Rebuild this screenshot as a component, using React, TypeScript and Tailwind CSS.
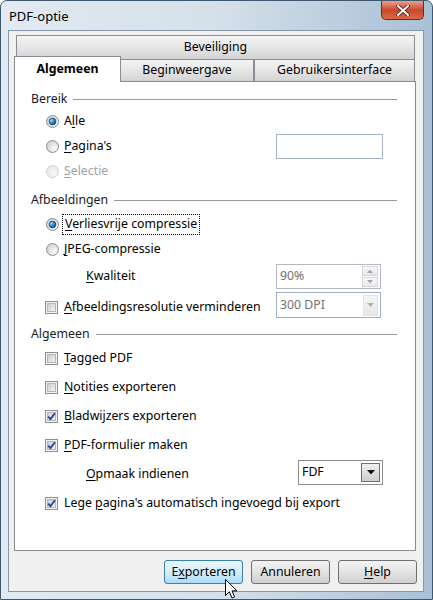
import React from "react";

const Radio = ({ checked = false, disabled = false }: { checked?: boolean; disabled?: boolean }) => (
  <svg width="13" height="13" viewBox="0 0 13 13" className="shrink-0">
    <defs>
      <radialGradient id={`rf${checked ? 1 : 0}${disabled ? 1 : 0}`} cx="0.65" cy="0.65" r="0.7">
        <stop offset="0" stopColor={disabled ? "#f7f7f7" : "#fbfbfb"} />
        <stop offset="1" stopColor={disabled ? "#e8e8e8" : "#cfd0d1"} />
      </radialGradient>
      <radialGradient id="rdot" cx="0.35" cy="0.35" r="0.75">
        <stop offset="0" stopColor="#a9dcfa" />
        <stop offset="0.45" stopColor="#2c8ad0" />
        <stop offset="1" stopColor="#0b3f7a" />
      </radialGradient>
    </defs>
    <circle cx="6.5" cy="6.5" r="6" fill={`url(#rf${checked ? 1 : 0}${disabled ? 1 : 0})`} stroke={disabled ? "#cfcfcf" : "#8c8e90"} strokeWidth="1" />
    {checked && <circle cx="6.5" cy="6.5" r="3.4" fill="url(#rdot)" stroke="#163f6e" strokeWidth="0.6" />}
  </svg>
);

const Check = ({ checked = false }: { checked?: boolean }) => (
  <svg width="13" height="13" viewBox="0 0 13 13" className="shrink-0">
    <defs>
      <linearGradient id="cbin" x1="0" y1="0" x2="1" y2="1">
        <stop offset="0" stopColor="#c6cace" />
        <stop offset="1" stopColor="#f7f7f7" />
      </linearGradient>
    </defs>
    <rect x="0.5" y="0.5" width="12" height="12" fill="#f4f4f4" stroke="#8e8f8f" />
    <rect x="2.5" y="2.5" width="8" height="8" fill="url(#cbin)" stroke="#b4b6b8" />
    {checked && (
      <path d="M3.2 6.6 L5.4 9.2 L9.9 3.2" fill="none" stroke="#2a4594" strokeWidth="1.9" strokeLinejoin="round" />
    )}
  </svg>
);

const U = ({ children }: { children: React.ReactNode }) => <span className="underline underline-offset-2">{children}</span>;

const Section = ({ label, className = "" }: { label: string; className?: string }) => (
  <div className={`flex items-center h-[18px] text-[#1a1a1a] ${className}`}>
    <span>{label}</span>
    <div className="flex-1 ml-[6px] h-px bg-[#9a9a9a]" />
  </div>
);

const Tab = ({ children, className = "" }: { children: React.ReactNode; className?: string }) => (
  <div
    className={`h-full flex items-center justify-center border-t border-l border-r border-[#898c95] bg-gradient-to-b from-[#f4f4f4] via-[#e6e6e6] to-[#d3d3d3] text-black ${className}`}
  >
    {children}
  </div>
);

const Btn = ({ children, hover = false }: { children: React.ReactNode; hover?: boolean }) => (
  <div
    className={`w-[79px] h-[24px] rounded-[3px] border flex items-center justify-center text-black ${
      hover
        ? "border-[#3c7fb1] bg-gradient-to-b from-[#eaf6fd] via-[#d5eefc] to-[#a9daf6]"
        : "border-[#707070] bg-gradient-to-b from-[#f4f4f4] via-[#e3e3e3] to-[#cfcfcf]"
    }`}
  >
    {children}
  </div>
);

export default function App() {
  return (
    <div className="relative w-[433px] h-[600px] overflow-hidden font-['Noto_Sans',sans-serif] text-[12.3px] leading-none select-none">
      {/* frame */}
      <div className="w-[433px] h-[600px] rounded-t-[7px] border border-[#3f5870] bg-gradient-to-r from-[#e2eaf2] via-[#d5e0ea] to-[#a9c0d6] flex flex-col">
        <div className="h-[29px] flex items-start justify-between">
          <div className="pl-[8px] pt-[2px] h-[29px] flex items-center text-[13px] text-black">PDF-optie</div>
          <div className="mr-[8px] w-[43px] h-[19px] rounded-b-[5px] border border-t-0 border-[#6b2a1e] bg-gradient-to-b from-[#e8a08e] via-[#c8472c] to-[#d96a45] flex items-center justify-center">
            <svg width="14" height="11" viewBox="0 0 14 11">
              <path d="M2 1 L12 10 M12 1 L2 10" stroke="#4a1a12" strokeWidth="3.6" strokeLinecap="round" />
              <path d="M2 1 L12 10 M12 1 L2 10" stroke="#ffffff" strokeWidth="2" strokeLinecap="round" />
            </svg>
          </div>
        </div>
        {/* client area */}
        <div className="ml-[7px] mr-[8px] h-[562px] border border-[#8797a9] bg-[#f0f0f0] flex flex-col pl-[5px] pr-[7px]">
          <div className="h-[4px]" />
          {/* tab row 1 */}
          <div className="h-[24px] ml-[2px] mr-[1px] flex">
            <Tab className="flex-1">Beveiliging</Tab>
          </div>
          {/* tab row 2 */}
          <div className="h-[22px] ml-[2px] mr-[1px] flex items-end">
            <div className="relative z-10 -ml-[2px] w-[107px] h-[26px] -mb-px bg-white border-t border-l border-r border-[#898c95] flex items-center justify-center font-bold text-black pb-[1px]">
              Algemeen
            </div>
            <Tab className="w-[133px] border-l-0">Beginweergave</Tab>
            <Tab className="flex-1">Gebruikersinterface</Tab>
          </div>
          {/* panel */}
          <div className="h-[470px] border border-[#898c95] bg-white pl-[16px] pr-[18px] pt-[8px] text-black">
            <Section label="Bereik" />
            <div className="flex items-center h-[25px] pl-[15px] mt-[1px]">
              <Radio checked />
              <span className="ml-[5px]">
                A<U>l</U>le
              </span>
            </div>
            <div className="flex items-center h-[25px] pl-[15px]">
              <Radio />
              <span className="ml-[5px]">
                <U>P</U>agina's
              </span>
              <div className="ml-auto mr-[14px] w-[107px] h-[25px] border border-[#a6b3c5] bg-white" />
            </div>
            <div className="flex items-center h-[25px] pl-[15px] text-[#a3a3a3]">
              <Radio disabled />
              <span className="ml-[5px]">
                <U>S</U>electie
              </span>
            </div>

            <Section label="Afbeeldingen" className="mt-[7px]" />
            <div className="flex items-center h-[25px] pl-[15px] mt-[3px]">
              <Radio checked />
              <span className="ml-[3px] px-[2px] py-[3px] border border-dotted border-black">
                <U>V</U>erliesvrije compressie
              </span>
            </div>
            <div className="flex items-center h-[25px] pl-[15px]">
              <Radio />
              <span className="ml-[5px]">
                <U>J</U>PEG-compressie
              </span>
            </div>
            <div className="flex items-center h-[29px] pl-[55px]">
              <span>
                <U>K</U>waliteit
              </span>
              <div className="ml-auto mr-[16px] w-[105px] h-[25px] border border-[#b5bac2] bg-white flex items-center pl-[3px] text-[#727272]">
                <span className="flex-1">90%</span>
                <div className="w-[16px] h-[21px] mr-[2px] flex flex-col gap-[1px]">
                  <div className="flex-1 border border-[#d2d6dc] bg-gradient-to-b from-[#f8f8f8] to-[#e8e8e8] flex items-center justify-center">
                    <svg width="6" height="4" viewBox="0 0 6 4"><path d="M0 4 L3 0.5 L6 4 Z" fill="#a5a5a5" /></svg>
                  </div>
                  <div className="flex-1 border border-[#d2d6dc] bg-gradient-to-b from-[#f8f8f8] to-[#e8e8e8] flex items-center justify-center">
                    <svg width="6" height="4" viewBox="0 0 6 4"><path d="M0 0 L3 3.5 L6 0 Z" fill="#a5a5a5" /></svg>
                  </div>
                </div>
              </div>
            </div>
            <div className="flex items-center h-[28px] pl-[14px]">
              <div className="flex items-center pt-[4px]">
                <Check />
                <span className="ml-[6px]">
                  <U>A</U>fbeeldingsresolutie verminderen
                </span>
              </div>
              <div className="ml-auto mr-[16px] w-[105px] h-[26px] border border-[#9fb0c6] bg-white flex items-center pl-[3px] text-[#727272]">
                <span className="flex-1">300 DPI</span>
                <div className="w-[15px] h-[21px] mr-[2px] border border-[#e2e4e7] bg-gradient-to-b from-[#f5f5f5] to-[#e7e7e7] flex items-center justify-center">
                  <svg width="7" height="4" viewBox="0 0 7 4"><path d="M0 0 L3.5 4 L7 0 Z" fill="#b0b0b0" /></svg>
                </div>
              </div>
            </div>

            <Section label="Algemeen" className="mt-[6px]" />
            <div className="flex items-center h-[29px] pl-[14px] mt-[1px]">
              <Check />
              <span className="ml-[6px]">
                <U>T</U>agged PDF
              </span>
            </div>
            <div className="flex items-center h-[29px] pl-[14px]">
              <Check />
              <span className="ml-[6px]">
                <U>N</U>otities exporteren
              </span>
            </div>
            <div className="flex items-center h-[29px] pl-[14px]">
              <Check checked />
              <span className="ml-[6px]">
                <U>B</U>ladwijzers exporteren
              </span>
            </div>
            <div className="flex items-center h-[29px] pl-[14px]">
              <Check checked />
              <span className="ml-[6px]">
                <U>P</U>DF-formulier maken
              </span>
            </div>
            <div className="flex items-center h-[29px] pl-[55px]">
              <span>
                <U>O</U>pmaak indienen
              </span>
              <div className="ml-auto mr-[14px] self-start w-[85px] h-[25px] border border-[#8d8d8d] bg-white flex items-center pl-[3px] text-black">
                <span className="flex-1">FDF</span>
                <div className="w-[19px] h-[19px] mr-[2px] border border-[#6f6f6f] bg-gradient-to-b from-[#efefef] to-[#cfcfcf] flex items-center justify-center">
                  <svg width="8" height="5" viewBox="0 0 8 5"><path d="M0 0 L4 4.5 L8 0 Z" fill="#111111" /></svg>
                </div>
              </div>
            </div>
            <div className="flex items-center h-[29px] pl-[14px]">
              <Check checked />
              <span className="ml-[6px]">
                Lege <U>p</U>agina's automatisch ingevoegd bij export
              </span>
            </div>
          </div>
          {/* buttons */}
          <div className="mt-[9px] h-[24px] flex justify-end gap-[8px] -mr-[1px]">
            <Btn hover>
              E<U>x</U>porteren
            </Btn>
            <Btn>Annuleren</Btn>
            <Btn>
              <U>H</U>elp
            </Btn>
          </div>
        </div>
      </div>
      {/* mouse cursor */}
      <svg className="absolute left-[225px] top-[579px]" width="14" height="21" viewBox="0 0 14 21">
        <path d="M0.5 0.5 L0.5 16.5 L4.3 12.8 L7 19 L9.6 17.9 L7 11.9 L12 11.9 Z" fill="#ffffff" stroke="#000000" strokeWidth="1" strokeLinejoin="round" />
      </svg>
    </div>
  );
}
